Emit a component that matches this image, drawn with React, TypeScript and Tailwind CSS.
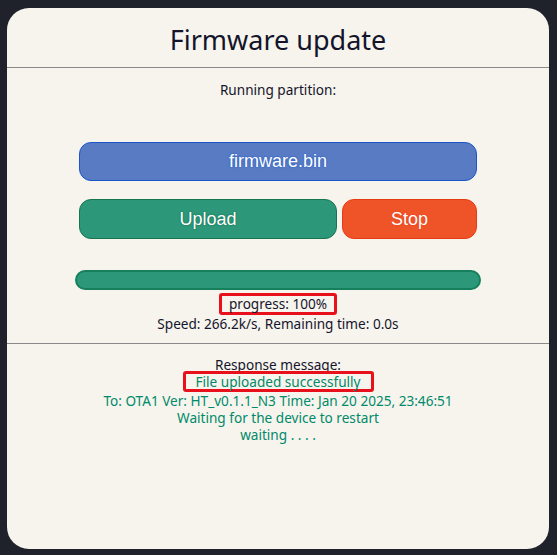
export default function App() {
  return (
    <div className="w-[557px] h-[555px] bg-[#20222b] pt-[8px] pl-[7px]">
      <div className="w-[542px] h-[541px] bg-[#f7f4ee] rounded-[22px] overflow-hidden font-['Noto_Sans',sans-serif] text-[#14142b]">
        <div className="h-[60px] border-b border-[#8a8a8a] flex items-center justify-center">
          <h1 className="text-[27px] leading-none pt-[4px]">Firmware update</h1>
        </div>

        <div className="flex flex-col items-center">
          <p className="text-[13.6px] leading-[18px] mt-[13px]">Running partition:</p>

          <div className="mt-[43px] w-[398px] flex flex-col gap-[18px]">
            <button className="h-[39px] w-full rounded-[12px] bg-[#587bc4] border border-[#1a56c8] text-white text-[18px] font-['Liberation_Sans',sans-serif] [text-shadow:0_0_2px_#1a56c8]">
              firmware.bin
            </button>
            <div className="flex gap-[5px]">
              <button className="h-[40px] w-[258px] rounded-[12px] bg-[#2d977a] border border-[#16754f] text-white text-[18px] font-['Liberation_Sans',sans-serif] [text-shadow:0_0_2px_#0e6a40]">
                Upload
              </button>
              <button className="h-[40px] flex-1 rounded-[12px] bg-[#ef5429] border border-[#e83a10] text-white text-[18px] font-['Liberation_Sans',sans-serif] [text-shadow:0_0_2px_#e83a10]">
                Stop
              </button>
            </div>
          </div>

          <div className="mt-[31px] w-[406px] h-[20px] rounded-[10px] bg-[#2d977a] border-2 border-[#16805c]" />

          <div className="mt-[3px] border-[3px] border-[#e8101a] rounded-[3px] px-[7px] h-[22px] flex items-center">
            <span className="text-[13.6px] leading-none">progress: 100%</span>
          </div>
          <p className="text-[13.6px] leading-[18px]">Speed: 266.2k/s, Remaining time: 0.0s</p>
        </div>

        <div className="mt-[10px] border-t border-[#8a8a8a] flex flex-col items-center">
          <p className="text-[13.6px] leading-[18px] mt-[12px]">Response message:</p>
          <div className="mt-[-3px] border-[3px] border-[#e8101a] rounded-[3px] px-[10px] h-[21px] flex items-center">
            <span className="text-[13.6px] leading-none text-[#008a6a]">File uploaded successfully</span>
          </div>
          <div className="text-[13.6px] leading-[17px] text-[#008a6a] text-center">
            <p>To: OTA1 Ver: HT_v0.1.1_N3 Time: Jan 20 2025, 23:46:51</p>
            <p>Waiting for the device to restart</p>
            <p>waiting . . . .</p>
          </div>
        </div>
      </div>
    </div>
  );
}
